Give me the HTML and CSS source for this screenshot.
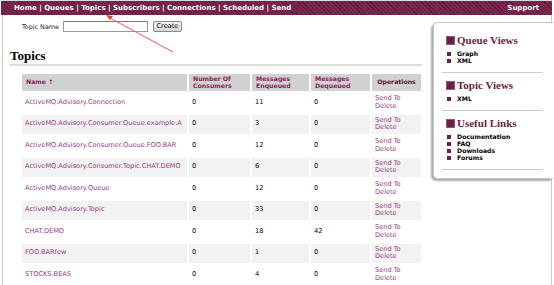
FILE: index.html
```html
<!DOCTYPE html>
<html lang="en">
<head>
    <meta charset="UTF-8">
    <title>ActiveMQ Console : Topics</title>
    <link rel="stylesheet" href="styles.css">
</head>
<body>
<div class="topbar">
    <div class="nav">
        <a href="#">Home</a> | <a href="#">Queues</a> | <a href="#">Topics</a> | <a href="#">Subscribers</a> |
        <a href="#">Connections</a> | <a href="#">Scheduled</a> | <a href="#">Send</a>
    </div>
    <div class="support"><a href="#">Support</a></div>
</div>

<div class="page">
    <div class="main">
        <form class="create">
            <label for="topic-name">Topic Name</label>
            <input type="text" id="topic-name">
            <button type="button">Create</button>
        </form>

        <h2>Topics</h2>

        <table class="topics">
            <thead>
            <tr>
                <th class="c-name"><a href="#">Name &#8593;</a></th>
                <th class="c-cons"><a href="#">Number Of<br>Consumers</a></th>
                <th class="c-enq"><a href="#">Messages<br>Enqueued</a></th>
                <th class="c-deq"><a href="#">Messages<br>Dequeued</a></th>
                <th class="c-ops">Operations</th>
            </tr>
            </thead>
            <tbody>
            <tr>
                <td><a href="#">ActiveMQ.Advisory.Connection</a></td>
                <td>0</td><td>11</td><td>0</td>
                <td><a href="#">Send To</a><br><a href="#">Delete</a></td>
            </tr>
            <tr>
                <td><a href="#">ActiveMQ.Advisory.Consumer.Queue.example.A</a></td>
                <td>0</td><td>3</td><td>0</td>
                <td><a href="#">Send To</a><br><a href="#">Delete</a></td>
            </tr>
            <tr>
                <td><a href="#">ActiveMQ.Advisory.Consumer.Queue.FOO.BAR</a></td>
                <td>0</td><td>12</td><td>0</td>
                <td><a href="#">Send To</a><br><a href="#">Delete</a></td>
            </tr>
            <tr>
                <td><a href="#">ActiveMQ.Advisory.Consumer.Topic.CHAT.DEMO</a></td>
                <td>0</td><td>6</td><td>0</td>
                <td><a href="#">Send To</a><br><a href="#">Delete</a></td>
            </tr>
            <tr>
                <td><a href="#">ActiveMQ.Advisory.Queue</a></td>
                <td>0</td><td>12</td><td>0</td>
                <td><a href="#">Send To</a><br><a href="#">Delete</a></td>
            </tr>
            <tr>
                <td><a href="#">ActiveMQ.Advisory.Topic</a></td>
                <td>0</td><td>33</td><td>0</td>
                <td><a href="#">Send To</a><br><a href="#">Delete</a></td>
            </tr>
            <tr>
                <td><a href="#">CHAT.DEMO</a></td>
                <td>0</td><td>18</td><td>42</td>
                <td><a href="#">Send To</a><br><a href="#">Delete</a></td>
            </tr>
            <tr>
                <td><a href="#">FOO.BARfew</a></td>
                <td>0</td><td>1</td><td>0</td>
                <td><a href="#">Send To</a><br><a href="#">Delete</a></td>
            </tr>
            <tr>
                <td><a href="#">STOCKS.BEAS</a></td>
                <td>0</td><td>4</td><td>0</td>
                <td><a href="#">Send To</a><br><a href="#">Delete</a></td>
            </tr>
            </tbody>
        </table>
    </div>

    <div class="sidebar">
        <div class="block">
            <h3><span class="sq"></span>Queue Views</h3>
            <ul>
                <li><a href="#">Graph</a></li>
                <li><a href="#">XML</a></li>
            </ul>
        </div>
        <div class="block">
            <h3><span class="sq"></span>Topic Views</h3>
            <ul>
                <li><a href="#">XML</a></li>
            </ul>
        </div>
        <div class="block">
            <h3><span class="sq"></span>Useful Links</h3>
            <ul>
                <li><a href="#">Documentation</a></li>
                <li><a href="#">FAQ</a></li>
                <li><a href="#">Downloads</a></li>
                <li><a href="#">Forums</a></li>
            </ul>
        </div>
    </div>
</div>

<!-- annotation arrow pointing at the Topics menu item -->
<svg class="arrow" width="554" height="285" viewBox="0 0 554 285">
    <line x1="173" y1="52" x2="110" y2="18" stroke="#f25a5a" stroke-width="1"/>
    <polygon points="106,15 113,16 110,20" fill="#f03a3a"/>
</svg>
</body>
</html>
```

FILE: styles.css
```css
html, body {
    margin: 0;
    overflow: hidden;
    background-color: #fff;
}

body {
    font-family: "DejaVu Sans", Verdana, sans-serif;
    font-size: 6.4px;
    color: #000;
    position: relative;
}

a {
    text-decoration: none;
    color: inherit;
}

/* top menu bar */
.topbar {
    margin: 0 2px 0 1px;
    border-top: 1px solid #ddd;
    height: 14px;
    display: flex;
    justify-content: space-between;
    align-items: center;
    padding: 0 13px 0 13px;
    background: repeating-linear-gradient(45deg, #6a1a42 0, #6a1a42 1px, #76284f 1px, #76284f 3px);
    color: #fff;
    font-weight: bold;
    font-size: 7px;
}

.page {
    margin: 0 2px;
    border-left: 1px solid #ccc;
    border-right: 1px solid #ccc;
    display: flex;
    align-items: flex-start;
    height: 270px;
}

.main {
    width: 413px;
    padding-left: 6px;
}

.create {
    margin: 6px 0 0 13px;
    display: flex;
    align-items: center;
    height: 11px;
}

.create label {
    font-size: 6.4px;
    color: #222;
    margin-right: 4px;
}

.create input {
    width: 85px;
    height: 11px;
    box-sizing: border-box;
    border: 1px solid #999;
    border-top-color: #777;
    margin: 0 5px 0 0;
    padding: 0;
}

.create button {
    height: 11px;
    width: 29px;
    padding: 0;
    font-family: "DejaVu Sans", Verdana, sans-serif;
    font-size: 6.6px;
    line-height: 9px;
    border: 1px solid #888;
    border-radius: 2px;
    background: linear-gradient(#f4f4f4, #d6d6d6);
    color: #000;
}

h2 {
    margin: 17px 0 0 0;
    padding: 0 0 1px 1px;
    font-family: "Liberation Serif", "Times New Roman", serif;
    font-size: 13px;
    line-height: 14px;
    border-bottom: 2px solid #ddd;
}

/* topics table */
.topics {
    margin: 6px 0 0 11px;
    border-spacing: 2px;
    table-layout: fixed;
    width: 403px;
}

.topics th {
    background-color: #d1d1d1;
    color: #8a1d5c;
    font-size: 6.2px;
    line-height: 6.6px;
    height: 17px;
    padding: 1px 4px;
    text-align: left;
    vertical-align: middle;
    box-sizing: border-box;
}

.topics th.c-name { width: 165px; }
.topics th.c-cons { width: 61px; }
.topics th.c-enq { width: 57px; }
.topics th.c-deq { width: 59px; }
.topics th.c-ops {
    width: 49px;
    color: #5a1535;
    text-align: center;
    padding: 1px 2px;
}

.topics td {
    padding: 2px 3px;
    font-size: 6.6px;
    line-height: 7.6px;
    height: 19.5px;
    box-sizing: border-box;
    white-space: nowrap;
    overflow: hidden;
    vertical-align: middle;
}

.topics td a {
    color: #973a83;
}

.topics tbody tr:nth-child(even) td {
    background-color: #f2f2f2;
}

/* right hand box */
.sidebar {
    width: 120px;
    margin: 7px -3px 0 11px;
    padding: 11px 10px 2px 8px;
    box-sizing: border-box;
    border: 1px solid #c8c8c8;
    border-right: none;
    border-radius: 5px 0 0 5px;
    box-shadow: -2px 2px 2px #aaa;
    background-color: #fff;
}

.block {
    border-bottom: 1px solid #ccc;
    padding: 0 0 8px 4px;
    margin-bottom: 6px;
}

.block h3 {
    margin: 0 0 4px 0;
    height: 12px;
    display: flex;
    align-items: center;
    font-family: "Liberation Serif", "Times New Roman", serif;
    font-size: 11px;
    color: #6b1f42;
}

.sq {
    width: 9px;
    height: 9px;
    box-sizing: border-box;
    background-color: #6b2048;
    border: 1px solid #94577a;
    margin-right: 2px;
}

.block ul {
    list-style: none;
    margin: 0;
    padding: 0;
}

.block li {
    font-weight: bold;
    font-size: 6.2px;
    line-height: 7px;
    display: flex;
    align-items: center;
}

.block li::before {
    content: "";
    width: 4px;
    height: 4px;
    background-color: #6b2048;
    margin: 0 6px 0 1px;
}

.arrow {
    position: absolute;
    left: 0;
    top: 0;
    pointer-events: none;
}
```
